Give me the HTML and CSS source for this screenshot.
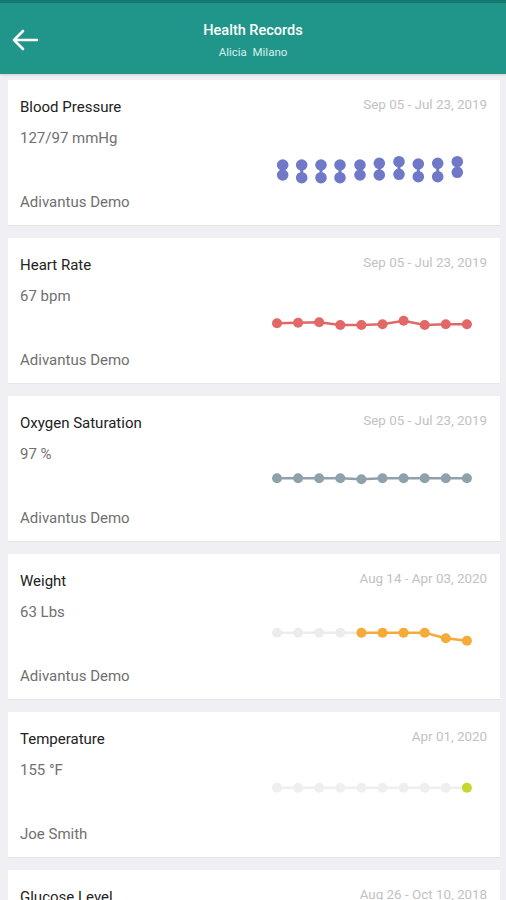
FILE: index.html
```html
<!DOCTYPE html>
<html lang="en">
<head>
    <meta charset="UTF-8">
    <meta name="viewport" content="width=device-width, initial-scale=1.0">
    <title>Health Records</title>
    <link rel="stylesheet" href="styles.css">
</head>
<body>
    <header class="topbar">
        <a href="#" class="back">
            <svg width="28" height="24" viewBox="0 0 28 24"><path d="M26 12H3M12 3L3 12l9 9" fill="none" stroke="#fff" stroke-width="2.6" stroke-linecap="round" stroke-linejoin="round"/></svg>
        </a>
        <div class="heading">
            <h1>Health Records</h1>
            <p>Alicia&nbsp; Milano</p>
        </div>
    </header>

    <main class="records">
        <div class="card">
            <div class="info">
                <h2>Blood Pressure</h2>
                <p class="value">127/97 mmHg</p>
                <p class="source">Adivantus Demo</p>
            </div>
            <div class="side">
                <span class="date">Sep 05 - Jul 23, 2019</span>
                <svg class="chart" width="225" height="60" viewBox="0 0 225 60">
                    <g stroke="#7079c8" stroke-width="3" fill="#7079c8">
                        <line x1="20.7" y1="35" x2="20.7" y2="45"/><circle cx="20.7" cy="35" r="4.3"/><circle cx="20.7" cy="45" r="4.3"/>
                        <line x1="39.7" y1="35" x2="39.7" y2="47.7"/><circle cx="39.7" cy="35" r="4.3"/><circle cx="39.7" cy="47.7" r="4.3"/>
                        <line x1="59" y1="35" x2="59" y2="47.7"/><circle cx="59" cy="35" r="4.3"/><circle cx="59" cy="47.7" r="4.3"/>
                        <line x1="78" y1="35" x2="78" y2="47.7"/><circle cx="78" cy="35" r="4.3"/><circle cx="78" cy="47.7" r="4.3"/>
                        <line x1="98" y1="35" x2="98" y2="45"/><circle cx="98" cy="35" r="4.3"/><circle cx="98" cy="45" r="4.3"/>
                        <line x1="117.3" y1="33.3" x2="117.3" y2="45"/><circle cx="117.3" cy="33.3" r="4.3"/><circle cx="117.3" cy="45" r="4.3"/>
                        <line x1="137" y1="31.7" x2="137" y2="44.3"/><circle cx="137" cy="31.7" r="4.3"/><circle cx="137" cy="44.3" r="4.3"/>
                        <line x1="156.3" y1="34" x2="156.3" y2="46.7"/><circle cx="156.3" cy="34" r="4.3"/><circle cx="156.3" cy="46.7" r="4.3"/>
                        <line x1="175.7" y1="33.3" x2="175.7" y2="46.7"/><circle cx="175.7" cy="33.3" r="4.3"/><circle cx="175.7" cy="46.7" r="4.3"/>
                        <line x1="195.3" y1="31.7" x2="195.3" y2="42.3"/><circle cx="195.3" cy="31.7" r="4.3"/><circle cx="195.3" cy="42.3" r="4.3"/>
                    </g>
                </svg>
            </div>
        </div>

        <div class="card">
            <div class="info">
                <h2>Heart Rate</h2>
                <p class="value">67 bpm</p>
                <p class="source">Adivantus Demo</p>
            </div>
            <div class="side">
                <span class="date">Sep 05 - Jul 23, 2019</span>
                <svg class="chart" width="225" height="60" viewBox="0 0 225 60">
                    <polyline points="15,35.3 36.1,34.7 57.2,34.3 78.3,37 99.4,37 120.5,36.3 141.6,32.7 162.7,37 183.8,36.3 204.9,36.3" fill="none" stroke="#e26767" stroke-width="2.5"/>
                    <g fill="#e26767">
                        <circle cx="15" cy="35.3" r="5"/><circle cx="36.1" cy="34.7" r="5"/><circle cx="57.2" cy="34.3" r="5"/><circle cx="78.3" cy="37" r="5"/><circle cx="99.4" cy="37" r="5"/>
                        <circle cx="120.5" cy="36.3" r="5"/><circle cx="141.6" cy="32.7" r="5"/><circle cx="162.7" cy="37" r="5"/><circle cx="183.8" cy="36.3" r="5"/><circle cx="204.9" cy="36.3" r="5"/>
                    </g>
                </svg>
            </div>
        </div>

        <div class="card">
            <div class="info">
                <h2>Oxygen Saturation</h2>
                <p class="value">97 %</p>
                <p class="source">Adivantus Demo</p>
            </div>
            <div class="side">
                <span class="date">Sep 05 - Jul 23, 2019</span>
                <svg class="chart" width="225" height="60" viewBox="0 0 225 60">
                    <polyline points="15,32.3 36.1,32.3 57.2,32.3 78.3,32.3 99.4,33.3 120.5,32.3 141.6,32.3 162.7,32.3 183.8,32.3 204.9,32.3" fill="none" stroke="#8fa2ab" stroke-width="2.5"/>
                    <g fill="#8fa2ab">
                        <circle cx="15" cy="32.3" r="5"/><circle cx="36.1" cy="32.3" r="5"/><circle cx="57.2" cy="32.3" r="5"/><circle cx="78.3" cy="32.3" r="5"/><circle cx="99.4" cy="33.3" r="5"/>
                        <circle cx="120.5" cy="32.3" r="5"/><circle cx="141.6" cy="32.3" r="5"/><circle cx="162.7" cy="32.3" r="5"/><circle cx="183.8" cy="32.3" r="5"/><circle cx="204.9" cy="32.3" r="5"/>
                    </g>
                </svg>
            </div>
        </div>

        <div class="card">
            <div class="info">
                <h2>Weight</h2>
                <p class="value">63 Lbs</p>
                <p class="source">Adivantus Demo</p>
            </div>
            <div class="side">
                <span class="date">Aug 14 - Apr 03, 2020</span>
                <svg class="chart" width="225" height="60" viewBox="0 0 225 60">
                    <polyline points="15,28.7 36.1,28.7 57.2,28.7 78.3,28.7 99.4,28.7" fill="none" stroke="#ececec" stroke-width="2.5"/>
                    <polyline points="99.4,28.7 120.5,28.7 141.6,28.7 162.7,28.7 183.8,34.3 204.9,36.7" fill="none" stroke="#f6aa37" stroke-width="2.5"/>
                    <g fill="#ececec">
                        <circle cx="15" cy="28.7" r="5"/><circle cx="36.1" cy="28.7" r="5"/><circle cx="57.2" cy="28.7" r="5"/><circle cx="78.3" cy="28.7" r="5"/>
                    </g>
                    <g fill="#f6aa37">
                        <circle cx="99.4" cy="28.7" r="5"/><circle cx="120.5" cy="28.7" r="5"/><circle cx="141.6" cy="28.7" r="5"/><circle cx="162.7" cy="28.7" r="5"/><circle cx="183.8" cy="34.3" r="5"/><circle cx="204.9" cy="36.7" r="5"/>
                    </g>
                </svg>
            </div>
        </div>

        <div class="card">
            <div class="info">
                <h2>Temperature</h2>
                <p class="value">155 °F</p>
                <p class="source">Joe Smith</p>
            </div>
            <div class="side">
                <span class="date">Apr 01, 2020</span>
                <svg class="chart" width="225" height="60" viewBox="0 0 225 60">
                    <polyline points="15,25.7 204.9,25.7" fill="none" stroke="#efefef" stroke-width="2.5"/>
                    <g fill="#efefef">
                        <circle cx="15" cy="25.7" r="5"/><circle cx="36.1" cy="25.7" r="5"/><circle cx="57.2" cy="25.7" r="5"/><circle cx="78.3" cy="25.7" r="5"/><circle cx="99.4" cy="25.7" r="5"/>
                        <circle cx="120.5" cy="25.7" r="5"/><circle cx="141.6" cy="25.7" r="5"/><circle cx="162.7" cy="25.7" r="5"/><circle cx="183.8" cy="25.7" r="5"/>
                    </g>
                    <circle cx="204.9" cy="25.7" r="5" fill="#c3d82b"/>
                </svg>
            </div>
        </div>

        <div class="card">
            <div class="info">
                <h2>Glucose Level</h2>
                <p class="value">98 mg/dL</p>
                <p class="source">Adivantus Demo</p>
            </div>
            <div class="side">
                <span class="date">Aug 26 - Oct 10, 2018</span>
            </div>
        </div>
    </main>
</body>
</html>
```

FILE: styles.css
```css
* {
    box-sizing: border-box;
}
body {
    margin: 0;
    font-family: Roboto, "Noto Sans", Arial, sans-serif;
    background: #efeff4;
    width: 506px;
    overflow: hidden;
}
.topbar {
    height: 74px;
    background: #20968a;
    border-top: 3px solid #177a70;
    display: flex;
    align-items: center;
    position: relative;
    box-shadow: 0 1px 2px rgba(0, 0, 0, 0.15);
}
.back {
    position: absolute;
    left: 11px;
    top: 25px;
    display: block;
    line-height: 0;
}
.heading {
    flex: 1;
    text-align: center;
    color: #fff;
    padding-top: 4px;
}
.heading h1 {
    margin: 0;
    font-size: 14.5px;
    font-weight: 500;
    line-height: 20px;
}
.heading p {
    margin: 3px 0 0;
    font-size: 11.5px;
    line-height: 16px;
    color: #d6eeea;
}
.records {
    padding: 6px 6px 0 8px;
    display: flex;
    flex-direction: column;
    gap: 13px;
}
.card {
    background: #fff;
    height: 145px;
    flex-shrink: 0;
    display: flex;
    padding: 17px 13px 13px 12px;
    box-shadow: 0 1px 1px rgba(0, 0, 0, 0.04);
}
.info {
    flex: 1;
    display: flex;
    flex-direction: column;
}
.info h2 {
    margin: 0;
    font-size: 15px;
    font-weight: 400;
    line-height: 20px;
    color: #222;
}
.value {
    margin: 11px 0 0;
    font-size: 15px;
    line-height: 20px;
    color: #707070;
}
.source {
    margin: auto 0 0;
    font-size: 15px;
    line-height: 20px;
    color: #707070;
}
.side {
    display: flex;
    flex-direction: column;
    align-items: flex-end;
}
.date {
    font-size: 13.4px;
    line-height: 16px;
    color: #c2c2c2;
}
.chart {
    display: block;
    margin-top: 17px;
}
```
